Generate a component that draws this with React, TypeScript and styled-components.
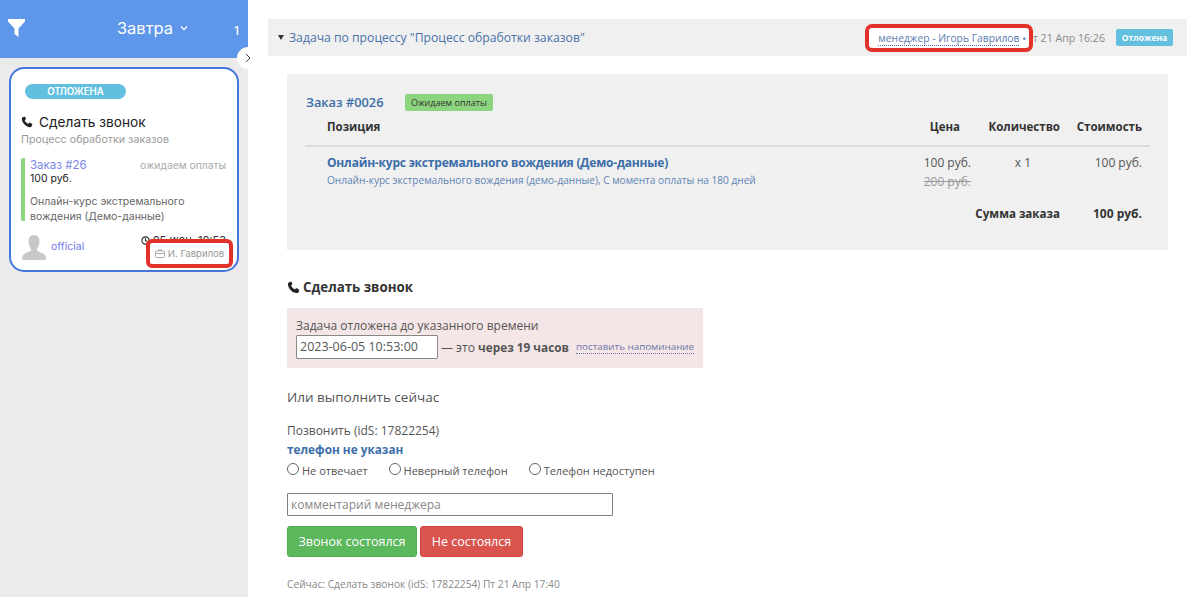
import React from 'react';
import styled, { createGlobalStyle } from 'styled-components';

const Global = createGlobalStyle`
  html, body { margin: 0; padding: 0; height: 597px; overflow: hidden; background: #fff; }
  body { font-family: "Open Sans", "Liberation Sans", sans-serif; color: #333; }
  * { box-sizing: border-box; }
`;

const Page = styled.div`display: flex; width: 1200px; height: 597px; overflow: hidden;`;
const Sidebar = styled.aside`
  position: relative; width: 248px; flex: none; background: #ebebeb;
  font-family: Inter, "Noto Sans", sans-serif;
`;
const SideHead = styled.header`
  height: 58px; background: #5e96ea; color: #fff; display: flex; align-items: center;
  padding: 0 9px 2px 8px;
`;
const PeriodTitle = styled.div`
  flex: 1; display: flex; align-items: center; justify-content: center; gap: 7px;
  font-size: 16.5px; padding-left: 46px;
`;
const Count = styled.span`font-size: 12px; font-weight: 500; padding-top: 4px;`;
const Toggle = styled.button`
  position: absolute; z-index: 2; left: 237px; top: 47px; width: 22px; height: 22px; border-radius: 50%;
  border: 0; padding: 0; background: #fff; display: flex; align-items: center; justify-content: center; color: #333;
`;
const Card = styled.article`
  position: relative; margin: 9px 9px 0 9px; height: 205px; background: #fff;
  border: 2px solid #4477dd; border-radius: 15px; padding: 15px 11px 0 10px;
`;
const StatusPill = styled.div`
  width: 101px; height: 15px; margin-left: 4px; border-radius: 8px; background: #62c0de; color: #fff;
  font-size: 9.7px; font-weight: 600; line-height: 15px; text-align: center;
`;
const CardTitle = styled.div`
  display: flex; align-items: center; gap: 6px; margin-top: 14px; font-size: 13.7px; line-height: 18px; color: #222;
`;
const Muted = styled.div`font-size: 10.7px; line-height: 15px; color: #9a9a9a; margin-top: 1px;`;
const OrderBlock = styled.div`
  margin-top: 11px; border-left: 4px solid #8cd67f; border-radius: 2px; padding-left: 5px; height: 63px; font-size: 10.5px; line-height: 15px; color: #666;
`;
const OrderTop = styled.div`display: flex; justify-content: space-between; align-items: baseline; height: 13px;`;
const OrderLink = styled.span`color: #7c86ea; font-size: 11.5px; line-height: 14px;`;
const OrderState = styled.span`color: #aaa; font-size: 10.3px; line-height: 14px;`;
const OrderPrice = styled.div`color: #222; margin-bottom: 8px;`;
const CardFoot = styled.div`position: relative; display: flex; align-items: flex-start; margin-top: 14px; padding-left: 1px;`;
const Official = styled.span`color: #6d78e8; font-size: 10.5px; margin: 5px 0 0 5px;`;
const DateText = styled.span`
  margin-left: auto; margin-top: -2px; font-size: 11px; line-height: 14px; color: #333;
  display: inline-flex; align-items: center; gap: 3px;
`;
const OwnerMark = styled.div`
  position: absolute; left: 135px; top: 170px; width: 87px; height: 29px; background: #fff;
  border: 4px solid #e0312a; border-radius: 6px; display: flex; align-items: center; justify-content: center; gap: 3px;
  font-size: 9.6px; color: #999; white-space: nowrap;
`;

const Main = styled.main`flex: 1; padding: 19px 13px 0 20px; min-width: 0;`;
const TaskBar = styled.div`
  display: flex; align-items: center; height: 37px; background: #f0f0f0; padding: 0 14px 0 10px; font-size: 12.2px;
`;
const Caret = styled.span`
  width: 0; height: 0; border: 3.5px solid transparent; border-top: 5px solid #333; border-bottom: 0; margin-right: 4px;
`;
const TaskLink = styled.span`color: #4a72a8; margin-left: 1px;`;
const ManagerMark = styled.div`
  position: relative; z-index: 1; margin-left: auto; margin-right: -8px; width: 168px; height: 28px; background: #fff; border: 4px solid #e0312a; border-radius: 7px;
  display: flex; align-items: center; justify-content: center; padding: 2px 0 0 6px; font-size: 10.3px; color: #5a7db0; white-space: nowrap;
`;
const Dotted = styled.span`border-bottom: 1px dotted #4a72a8; line-height: 13px;`;
const Stamp = styled.span`font-size: 10.6px; color: #8a8a8a; white-space: nowrap;`;
const Badge = styled.span`
  margin-left: 11px; width: 57px; height: 17px; border-radius: 2px; background: #62c0de; color: #fff; font-size: 8.5px;
  font-weight: 700; line-height: 17px; text-align: center;
`;
const OrderCard = styled.section`
  margin: 18px 19px 0 19px; height: 176px; background: #f0f0f0; padding: 20px 26px 0 19px;
`;
const OrderHead = styled.div`display: flex; align-items: center; height: 16px;`;
const OrderNo = styled.span`color: #3c6ea8; font-size: 12.8px; font-weight: 600; width: 99px;`;
const OrderBadge = styled.span`
  background: #8dd47f; border-radius: 2px; padding: 0 6px; height: 17px; line-height: 17px; font-size: 9px; color: #333;
`;
const HeadRow = styled.div`
  display: grid; grid-template-columns: 1fr 100px 100px 82px; margin: 6px -8px 0 -1px; padding: 0 8px 0 22px;
  height: 31px; line-height: 22px; border-bottom: 2px solid #dcdcdc; font-weight: 700; font-size: 11.5px; color: #333;
`;
const ItemRow = styled.div`
  display: grid; grid-template-columns: 1fr 89px 89px 82px; margin-left: -1px; padding-left: 22px;
`;
const Cell = styled.div<{ $align?: string; $pad?: number }>`
  text-align: ${p => p.$align || 'right'}; white-space: nowrap; padding-left: ${p => p.$pad || 0}px;
`;
const ItemName = styled.div`font-size: 12px; letter-spacing: -0.2px; font-weight: 700; color: #3c6ea8; line-height: 17px; margin-top: 7px;`;
const ItemDesc = styled.div`font-size: 10.1px; color: #5f85b5; line-height: 16px; margin-top: 1px;`;
const Num = styled.div`font-size: 12px; color: #555; line-height: 18px; margin-top: 7px;`;
const Old = styled.div`font-size: 12px; color: #999; line-height: 19px; text-decoration: line-through;`;
const TotalRow = styled.div`
  display: flex; justify-content: flex-end; font-size: 11.6px; font-weight: 700; color: #333; margin-top: 14px; line-height: 18px;
`;
const TotalVal = styled.span`width: 82px; text-align: right; font-size: 12px;`;
const Action = styled.section`margin: 0 0 0 19px;`;
const ActionTitle = styled.h3`
  display: flex; align-items: center; gap: 3px; margin: 28px 0 0; font-size: 13.3px; font-weight: 700; line-height: 18px; color: #333;
`;
const Pink = styled.div`
  margin-top: 12px; width: 416px; height: 60px; background: #f4e5e6; padding: 9px 9px 0; font-size: 12px; color: #555; line-height: 17px;
`;
const PinkRow = styled.div`display: flex; align-items: center; margin-top: 1px; white-space: nowrap;`;
const DateInput = styled.div`
  flex: none; width: 142px; height: 24px; background: #fff; border: 1px solid #888; border-radius: 1px; padding: 0 3px; line-height: 22px; font-size: 12.5px; color: #555; margin-right: 3px;
`;
const Strong = styled.b`font-size: 11.8px;`;
const Remind = styled.span`
  margin-left: 7px; font-size: 9.8px; color: #6d78a8; border-bottom: 1px dotted #6d78a8; line-height: 13px;
`;
const Sub = styled.div`margin-top: 20px; font-size: 13.5px; line-height: 18px; color: #555;`;
const Plain = styled.div`margin-top: 16px; font-size: 12px; line-height: 17px; color: #555;`;
const Phone = styled.div`font-size: 11.8px; font-weight: 700; color: #3c6ea8; line-height: 19px; margin-top: 1px;`;
const Radios = styled.div`display: flex; gap: 21px; margin-top: 3px; font-size: 11px; color: #555; line-height: 18px;`;
const RadioLabel = styled.label`display: flex; align-items: flex-start; gap: 3px;`;
const Dot = styled.span`
  width: 12px; height: 12px; border: 1px solid #666; border-radius: 50%; background: #fff; margin-top: 1px;
`;
const Comment = styled.div`
  margin-top: 13px; width: 326px; height: 23px; background: #fff; border: 1px solid #808080; border-radius: 1px; padding: 0 3px; font-size: 12px; line-height: 21px; color: #888;
`;
const Buttons = styled.div`display: flex; gap: 3px; margin-top: 10px;`;
const Btn = styled.button<{ $bg: string; $edge: string; $w: number }>`
  width: ${p => p.$w}px; height: 31px; border: 1px solid ${p => p.$edge}; border-radius: 3px; background: ${p => p.$bg}; color: #fff;
  font: 12.5px "Open Sans", sans-serif; padding: 0;
`;
const Now = styled.div`margin-top: 20px; font-size: 10.2px; color: #888; line-height: 14px;`;

const PhoneIcon = ({ size = 12 }: { size?: number }) => (
  <svg width={size} height={size} viewBox="0 0 24 24" fill="#222">
    <path d="M6.6 1.5 3.4 2.7C1.6 3.5 1.4 6 2.2 9c1.7 6 6.8 11 12.8 12.800 3 .9 5.500.6 6.300-1.200l1.200-3.200c.3-.8 0-1.500-.7-1.900l-3.700-2.100c-.7-.4-1.500-.2-2 .4l-1.400 1.800c-3.200-1.400-5.900-4.100-7.300-7.300l1.800-1.400c.6-.5.8-1.300.4-2L8.500 2.200c-.4-.7-1.100-1-1.900-.7Z" />
  </svg>
);

export default function App() {
  return (
    <Page>
      <Global />
      <Sidebar>
        <SideHead>
          <svg width="17" height="18" viewBox="0 0 17 18" fill="#fff"><path d="M0 0h17v2.5L10.5 9.5V18L6.5 15V9.5L0 2.5Z" /></svg>
          <PeriodTitle>
            Завтра
            <svg width="8" height="6" viewBox="0 0 8 6" fill="none" stroke="#fff" strokeWidth="1.3"><path d="M1 1.5 4 4.5 7 1.5" /></svg>
          </PeriodTitle>
          <Count>1</Count>
        </SideHead>
        <Toggle aria-label="Свернуть">
          <svg width="6" height="10" viewBox="0 0 6 10" fill="none" stroke="#444" strokeWidth="1"><path d="M1 1 5 5 1 9" /></svg>
        </Toggle>
        <Card>
          <StatusPill>ОТЛОЖЕНА</StatusPill>
          <CardTitle><PhoneIcon />Сделать звонок</CardTitle>
          <Muted>Процесс обработки заказов</Muted>
          <OrderBlock>
            <OrderTop><OrderLink>Заказ #26</OrderLink><OrderState>ожидаем оплаты</OrderState></OrderTop>
            <OrderPrice>100 руб.</OrderPrice>
            <div>Онлайн-курс экстремального<br />вождения (Демо-данные)</div>
          </OrderBlock>
          <CardFoot>
            <svg width="24" height="25" viewBox="0 0 24 25" fill="#c8c8c8"><path d="M12 0c4 0 5.5 3 5.5 6.5S15.5 13 15 14.5c0 2 3 2.5 6 4 2 1 3 2.5 3 6.5H0c0-4 1-5.5 3-6.5 3-1.5 6-2 6-4C8.5 13 6.5 10 6.5 6.5S8 0 12 0Z" /></svg>
            <Official>official</Official>
            <DateText>
              <svg width="9" height="9" viewBox="0 0 10 10" fill="none" stroke="#222" strokeWidth="1.2"><circle cx="5" cy="5" r="4" /><path d="M5 2.5V5L7 6" /></svg>
              05 июн, 10:53
            </DateText>
          </CardFoot>
          <OwnerMark>
            <svg width="10" height="9" viewBox="0 0 10 9" fill="none" stroke="#999" strokeWidth=".8"><rect x=".5" y="2" width="9" height="6.5" rx="1" /><path d="M3.5 2V.7h3V2M.5 4.5h9" /></svg>
            И. Гаврилов
          </OwnerMark>
        </Card>
      </Sidebar>
      <Main>
        <TaskBar>
          <Caret />
          <TaskLink>Задача по процессу "Процесс обработки заказов"</TaskLink>
          <ManagerMark><Dotted>менеджер - Игорь Гаврилов</Dotted>&nbsp;•</ManagerMark>
          <Stamp>Пт 21 Апр 16:26</Stamp>
          <Badge>Отложена</Badge>
        </TaskBar>
        <OrderCard>
          <OrderHead><OrderNo>Заказ #0026</OrderNo><OrderBadge>Ожидаем оплаты</OrderBadge></OrderHead>
          <HeadRow>
            <Cell $align="left">Позиция</Cell><Cell>Цена</Cell><Cell>Количество</Cell><Cell>Стоимость</Cell>
          </HeadRow>
          <ItemRow>
            <Cell $align="left">
              <ItemName>Онлайн-курс экстремального вождения (Демо-данные)</ItemName>
              <ItemDesc>Онлайн-курс экстремального вождения (демо-данные), С момента оплаты на 180 дней</ItemDesc>
            </Cell>
            <Cell><Num>100 руб.</Num><Old>200 руб.</Old></Cell>
            <Cell $align="center" $pad={15}><Num>x 1</Num></Cell>
            <Cell><Num>100 руб.</Num></Cell>
          </ItemRow>
          <TotalRow><span>Сумма заказа</span><TotalVal>100 руб.</TotalVal></TotalRow>
        </OrderCard>
        <Action>
          <ActionTitle><PhoneIcon size={13} />Сделать звонок</ActionTitle>
          <Pink>
            Задача отложена до указанного времени
            <PinkRow>
              <DateInput>2023-06-05 10:53:00</DateInput>— это&nbsp;<Strong>через 19 часов</Strong>
              <Remind>поставить напоминание</Remind>
            </PinkRow>
          </Pink>
          <Sub>Или выполнить сейчас</Sub>
          <Plain>Позвонить (idS: 17822254)</Plain>
          <Phone>телефон не указан</Phone>
          <Radios>
            <RadioLabel><Dot />Не отвечает</RadioLabel>
            <RadioLabel><Dot />Неверный телефон</RadioLabel>
            <RadioLabel><Dot />Телефон недоступен</RadioLabel>
          </Radios>
          <Comment>комментарий менеджера</Comment>
          <Buttons>
            <Btn $bg="#5cb85c" $edge="#4cae4c" $w={130}>Звонок состоялся</Btn>
            <Btn $bg="#d9534f" $edge="#d43f3a" $w={103}>Не состоялся</Btn>
          </Buttons>
          <Now>Сейчас: Сделать звонок (idS: 17822254) Пт 21 Апр 17:40</Now>
        </Action>
      </Main>
    </Page>
  );
}
